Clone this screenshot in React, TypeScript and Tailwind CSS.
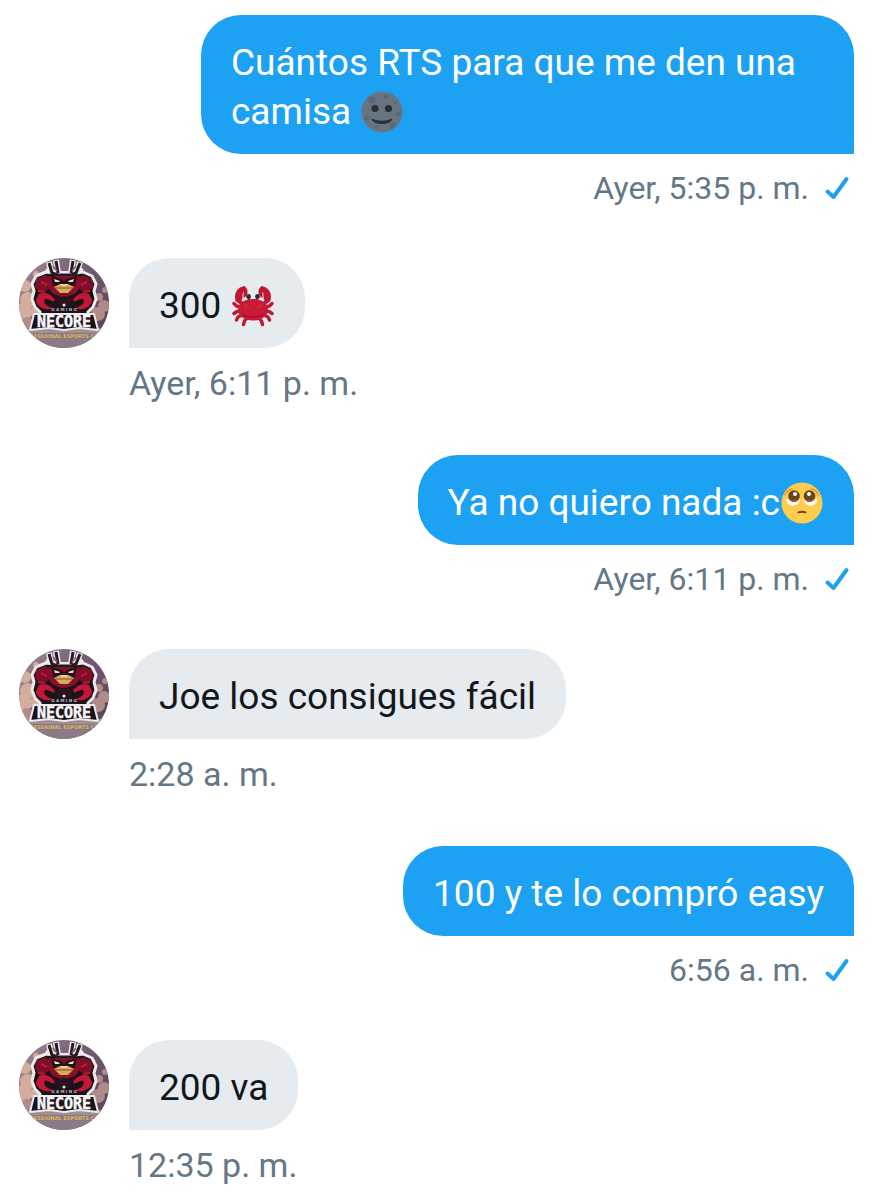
import type { ReactNode } from "react";

const EMOJI = "inline-block size-[42px] mx-px align-[-9px]";

const MoonEmoji = () => (
  <svg viewBox="0 0 42 42" className={EMOJI} role="img" aria-label="luna nueva">
    <circle cx="21" cy="21" r="20.5" fill="#66757f" />
    <g fill="#5b6876">
      <circle cx="11" cy="9" r="3.6" />
      <circle cx="25" cy="6" r="2.2" />
      <circle cx="37" cy="23" r="2.4" />
      <circle cx="6" cy="27" r="2.6" />
      <circle cx="31" cy="34" r="3" />
      <circle cx="16" cy="36" r="1.8" />
      <circle cx="34" cy="12" r="1.6" />
    </g>
    <circle cx="14" cy="17.5" r="3.6" fill="#292f33" />
    <circle cx="27.5" cy="17.5" r="3.6" fill="#292f33" />
    <path d="M11 28C17 31 25 31 31 28C30 31 26 32.500 21 32.500C16 32.500 12 31 11 28Z" fill="#292f33" stroke="#292f33" strokeWidth="1" strokeLinejoin="round" />
  </svg>
);

const CrabEmoji = () => (
  <svg viewBox="0 0 42 42" className={EMOJI} role="img" aria-label="cangrejo">
    <g fill="none" stroke="#be1931" strokeWidth="3.4" strokeLinecap="round" strokeLinejoin="round">
      <path d="M9 22L4.500 21L2 18.500M9 26L5 26.500L2 28.500M10 30L6 32L4.500 35M15 33L12.500 36L11.500 39.500" />
      <path d="M33 22L37.500 21L40 18.500M33 26L37 26.500L40 28.500M32 30L36 32L37.500 35M27 33L29.500 36L30.500 39.500" />
      <path d="M12 20L7 16L6.500 12M30 20L35 16L35.500 12" strokeWidth="4" />
    </g>
    <path d="M12.500 1C5 2 1 9 4 17C8 18 10.500 16 10.500 12C10.500 9 10.500 8 11.500 6.500L11.500 13C16.500 10.500 17 4.500 12.500 1Z" fill="#be1931" />
    <path d="M29.500 1C37 2 41 9 38 17C34 18 31.500 16 31.500 12C31.500 9 31.500 8 30.500 6.500L30.500 13C25.500 10.500 25 4.500 29.500 1Z" fill="#be1931" />
    <path d="M17 18V12M25 18V12" stroke="#be1931" strokeWidth="2.400" />
    <circle cx="16.500" cy="11.500" r="2.400" fill="#292f33" />
    <circle cx="25.500" cy="11.500" r="2.400" fill="#292f33" />
    <path d="M21 14C30 14 36 18.500 36 25C36 31 29.500 35.500 21 35.500C12.500 35.500 6 31 6 25C6 18.500 12 14 21 14Z" fill="#c91b37" />
    <path d="M11 29C14 33 28 33 31 29" fill="none" stroke="#a0041e" strokeWidth="1.200" />
    <g fill="#dd2e44">
      <circle cx="14" cy="21" r="1.200" />
      <circle cx="21" cy="19" r="1" />
      <circle cx="28" cy="21" r="1.200" />
      <circle cx="18" cy="23" r="0.800" />
      <circle cx="25" cy="23" r="0.800" />
    </g>
  </svg>
);

const PleadingEmoji = () => (
  <svg viewBox="0 0 42 42" className={EMOJI} role="img" aria-label="cara suplicante">
    <circle cx="21" cy="21" r="20.5" fill="#ffcc4d" />
    <path d="M5 17C5 25.500 19 26 19 16.500Z" fill="#ffffff" />
    <path d="M22.500 16.500C22.500 26 36.500 25.500 36.500 17Z" fill="#ffffff" />
    <circle cx="13" cy="14" r="5.800" fill="#65471b" />
    <circle cx="28.500" cy="14" r="5.800" fill="#65471b" />
    <path d="M7.500 16.500C9 21 17 21 18.500 16.500C15 18.500 11 18.500 7.500 16.500ZM23 16.500C24.500 21 32.500 21 34 16.500C31 18.500 26 18.500 23 16.500Z" fill="#a8561f" />
    <circle cx="14" cy="12" r="2" fill="#ffffff" />
    <circle cx="28" cy="12" r="2" fill="#ffffff" />
    <path d="M4 13C5.500 9.500 8 7.500 11 7M37.500 13C36 9.500 33.500 7.500 30.500 7" fill="none" stroke="#f19020" strokeWidth="1.400" strokeLinecap="round" />
    <path d="M17.500 30.500C19 29.400 23 29.400 24.500 30.500" fill="none" stroke="#65471b" strokeWidth="2" strokeLinecap="round" />
  </svg>
);

const CheckMark = () => (
  <svg viewBox="0 0 26 26" className="size-[26px]" role="img" aria-label="Enviado">
    <path d="M3.500 16.500L9.500 22L22.500 4" fill="none" stroke="#1da1f2" strokeWidth="4" strokeLinecap="round" strokeLinejoin="round" />
  </svg>
);

const Avatar = () => (
  <svg viewBox="0 0 90 90" className="size-[90px] shrink-0 rounded-full" role="img" aria-label="Necore Gaming">
    <defs>
      <linearGradient id="sky" x1="0" y1="0" x2="1" y2="0.600">
        <stop offset="0" stopColor="#a58b95" />
        <stop offset="0.500" stopColor="#77627a" />
        <stop offset="1" stopColor="#5d4860" />
      </linearGradient>
    </defs>
    <rect width="90" height="90" fill="url(#sky)" />
    <g fill="#d3ad9e">
      <circle cx="6" cy="28" r="6" />
      <circle cx="9" cy="42" r="8" />
      <circle cx="4" cy="54" r="9" />
      <circle cx="15" cy="54" r="5" />
      <circle cx="17" cy="16" r="3" />
    </g>
    <g fill="#b08b8a">
      <circle cx="80" cy="39" r="4" />
      <circle cx="85" cy="48" r="6" />
      <circle cx="79" cy="56" r="7" />
      <circle cx="86" cy="32" r="3" />
      <circle cx="8" cy="65" r="6" />
    </g>
    <rect y="70" width="90" height="20" fill="#a18e92" />
    <rect y="81" width="90" height="9" fill="#8b7a88" />
    {/* antlers */}
    <path d="M30 4L32 14L39 16H52L58 14L61 4M37 2L39 15M54 2L52 15M28 10L34 15M63 10L57 15" fill="none" stroke="#eeeaec" strokeWidth="6" strokeLinejoin="round" />
    {/* body */}
    <path d="M27 14L35 15H56L64 14L73 18L77 26L75 33L77 41L74 49L69 54V60H21V54L16 49L13 41L15 33L13 26L17 18Z" fill="#19131a" stroke="#eeeaec" strokeWidth="3" strokeLinejoin="round" />
    <path d="M30 5L33 15L39 17H52L57 15L61 5M37 3L39 15M54 3L52 15" fill="none" stroke="#241b22" strokeWidth="3" />
    <path d="M34 8L38 13M57 8L53 13" stroke="#8f6068" strokeWidth="2" />
    <path d="M17 21L26 17L31 20L29 32L21 34L16 29ZM73 21L64 17L59 20L61 32L69 34L74 29Z" fill="#7c1029" />
    <path d="M30 18H60L62 29L56 36L47 39H42L34 36L28 29Z" fill="#860f29" />
    <path d="M20 36C25 33 35 37 36 43C34 45 29 40 26 41C23 44 28 49 34 50C28 54 17 49 17 42ZM70 36C65 33 55 37 54 43C56 45 61 40 64 41C67 44 62 49 56 50C62 54 73 49 73 42Z" fill="#c41636" />
    <path d="M22 24L28 27M68 24L62 27M19 33L26 34M71 33L64 34" fill="none" stroke="#c41636" strokeWidth="2" />
    <path d="M37 40L45 38L53 40L52 48H38Z" fill="#29141c" />
    {/* face */}
    <path d="M32 18L43 21L45 24L47 21L58 18L56 28H34Z" fill="#271118" />
    <path d="M35 21L41 23L40 24L36 24ZM55 21L49 23L50 24L54 24Z" fill="#eee2de" />
    <path d="M35 29L41 26H49L55 29L49 35H41Z" fill="#d9a95e" />
    <path d="M36 30L54 30" stroke="#80522f" />
    <path d="M41 26H49L47 28H43Z" fill="#efd19a" />
    <circle cx="45" cy="47" r="1.500" fill="#eeeaec" />
    <text x="45" y="53" textAnchor="middle" fill="#c8bdc4" className="font-['DejaVu_Sans'] text-[4px] font-bold" textRendering="geometricPrecision">G A M I N G</text>
    {/* name plate */}
    <path d="M15 56H75L79 72L60 70L45 72L30 70L11 72Z" fill="#19131a" stroke="#eeeaec" strokeWidth="2" strokeLinejoin="round" />
    <text x="45" y="69" textAnchor="middle" fill="#f7f5f6" stroke="#f7f5f6" strokeWidth="0.500" className="font-['DejaVu_Sans_Mono'] text-[15px] font-bold">NECORE</text>
    <rect x="14" y="75" width="62" height="6" fill="#857a80" />
    <text x="45" y="80" textAnchor="middle" fill="#e0b65f" className="font-['DejaVu_Sans'] text-[5px] font-bold">ESSIONAL ESPORTS C</text>
  </svg>
);

type Message = {
  id: number;
  sent: boolean;
  body: ReactNode;
  time: string;
};

const messages: Message[] = [
  { id: 1, sent: true, body: <>Cuántos RTS para que me den una camisa <MoonEmoji /></>, time: "Ayer, 5:35 p. m." },
  { id: 2, sent: false, body: <>300 <CrabEmoji /></>, time: "Ayer, 6:11 p. m." },
  { id: 3, sent: true, body: <>Ya no quiero nada :c<PleadingEmoji /></>, time: "Ayer, 6:11 p. m." },
  { id: 4, sent: false, body: "Joe los consigues fácil", time: "2:28 a. m." },
  { id: 5, sent: true, body: "100 y te lo compró easy", time: "6:56 a. m." },
  { id: 6, sent: false, body: "200 va", time: "12:35 p. m." },
];

const SentMessage = ({ message }: { message: Message }) => (
  <li className="flex flex-col items-end pl-[182px]">
    <p className="rounded-[40px] rounded-br-none bg-[#1da1f2] px-[30px] pt-[23px] pb-[18px] text-[37px] leading-[49px] text-white">
      {message.body}
    </p>
    <div className="mt-3 flex h-11 items-center gap-[15px] pr-1 text-[32px] leading-[44px] text-[#657786]">
      <time>{message.time}</time>
      <CheckMark />
    </div>
  </li>
);

const ReceivedMessage = ({ message }: { message: Message }) => (
  <li className="flex items-start gap-5">
    <Avatar />
    <div>
      <p className="w-fit rounded-[40px] rounded-bl-none bg-[#e6ebf0] px-[30px] pt-[23px] pb-[18px] text-[37px] leading-[49px] text-[#14171a]">
        {message.body}
      </p>
      <time className="mt-3 block text-[34px] leading-[47px] text-[#657786]">{message.time}</time>
    </div>
  </li>
);

const App = () => {
  return (
    <main className="min-h-screen bg-white font-['Roboto',sans-serif]">
      <ul className="flex flex-col gap-12 pt-[15px] pr-[30px] pl-[19px]">
        {messages.map((message) =>
          message.sent ? (
            <SentMessage key={message.id} message={message} />
          ) : (
            <ReceivedMessage key={message.id} message={message} />
          ),
        )}
      </ul>
    </main>
  );
};
export default App;
